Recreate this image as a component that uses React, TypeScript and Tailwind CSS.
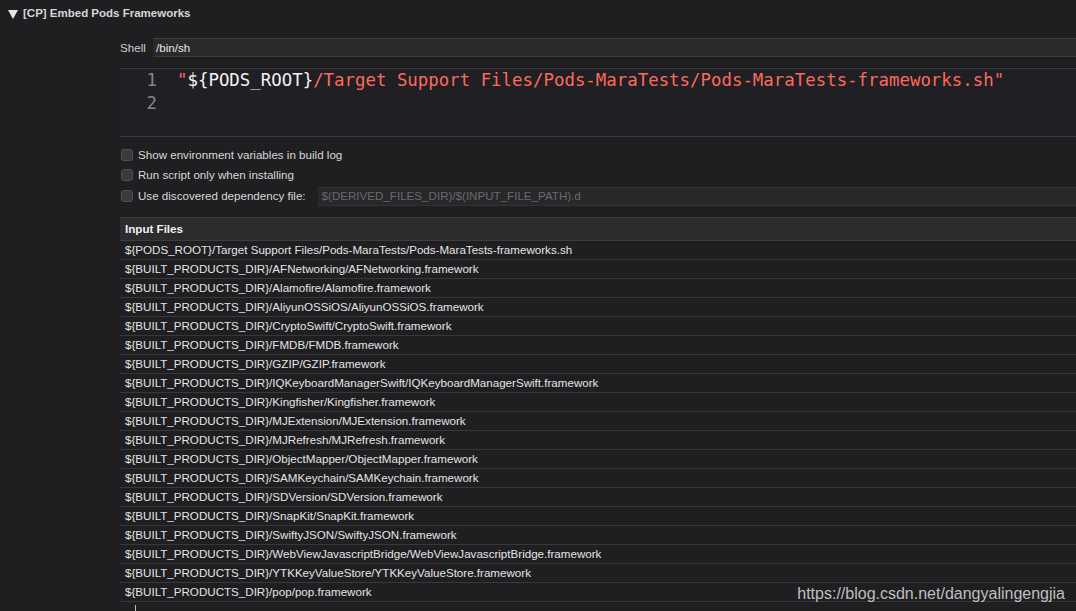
import React from 'react';

const files = [
  '${PODS_ROOT}/Target Support Files/Pods-MaraTests/Pods-MaraTests-frameworks.sh',
  '${BUILT_PRODUCTS_DIR}/AFNetworking/AFNetworking.framework',
  '${BUILT_PRODUCTS_DIR}/Alamofire/Alamofire.framework',
  '${BUILT_PRODUCTS_DIR}/AliyunOSSiOS/AliyunOSSiOS.framework',
  '${BUILT_PRODUCTS_DIR}/CryptoSwift/CryptoSwift.framework',
  '${BUILT_PRODUCTS_DIR}/FMDB/FMDB.framework',
  '${BUILT_PRODUCTS_DIR}/GZIP/GZIP.framework',
  '${BUILT_PRODUCTS_DIR}/IQKeyboardManagerSwift/IQKeyboardManagerSwift.framework',
  '${BUILT_PRODUCTS_DIR}/Kingfisher/Kingfisher.framework',
  '${BUILT_PRODUCTS_DIR}/MJExtension/MJExtension.framework',
  '${BUILT_PRODUCTS_DIR}/MJRefresh/MJRefresh.framework',
  '${BUILT_PRODUCTS_DIR}/ObjectMapper/ObjectMapper.framework',
  '${BUILT_PRODUCTS_DIR}/SAMKeychain/SAMKeychain.framework',
  '${BUILT_PRODUCTS_DIR}/SDVersion/SDVersion.framework',
  '${BUILT_PRODUCTS_DIR}/SnapKit/SnapKit.framework',
  '${BUILT_PRODUCTS_DIR}/SwiftyJSON/SwiftyJSON.framework',
  '${BUILT_PRODUCTS_DIR}/WebViewJavascriptBridge/WebViewJavascriptBridge.framework',
  '${BUILT_PRODUCTS_DIR}/YTKKeyValueStore/YTKKeyValueStore.framework',
  '${BUILT_PRODUCTS_DIR}/pop/pop.framework',
];

function Checkbox({ label, children }: { label: string; children?: React.ReactNode }) {
  return (
    <div className="flex h-[20px] items-center">
      <div className="ml-px h-[12px] w-[12px] rounded-[3px] border border-[#505053] bg-[#3a3a3d]" />
      <span className="ml-[5px] text-[11.6px] text-[#d8d8d8]">{label}</span>
      {children}
    </div>
  );
}

export default function App() {
  return (
    <div
      className="relative h-[611px] w-[1076px] overflow-hidden bg-[#1f1f22]"
      style={{ fontFamily: '"Liberation Sans", Arial, sans-serif' }}
    >
      {/* phase header */}
      <div className="flex h-[28px] items-center pl-[8px]">
        <svg width="10" height="9" viewBox="0 0 10 9" className="shrink-0">
          <path d="M0 0h10L5 9z" fill="#e6e6e6" />
        </svg>
        <span className="ml-[5px] text-[11.5px] font-bold text-[#d6d6d6]">[CP] Embed Pods Frameworks</span>
      </div>

      <div className="ml-[120px]">
        {/* shell */}
        <div className="mt-[10px] flex items-center">
          <span className="w-[33px] text-[11.6px] text-[#cfcfcf]">Shell</span>
          <div className="flex h-[19px] flex-1 items-center border-y border-[#3d3d40] bg-[#2a2a2d] pl-[3px] text-[11.6px] text-[#e6e6e6]">
            /bin/sh
          </div>
        </div>

        {/* script editor */}
        <div
          className="mt-[11px] flex h-[69px] border-y border-[#3a3a3d] bg-[#1f1f24] text-[17.4px] leading-[23px]"
          style={{ fontFamily: '"DejaVu Sans Mono", "Liberation Mono", monospace' }}
        >
          <div className="w-[37px] text-right text-[#85858a]">
            <div>1</div>
            <div>2</div>
          </div>
          <div className="ml-[20px] whitespace-pre">
            <span className="text-[#fc6a5d]">"</span>
            <span className="text-[#f2f2f2]">{'${PODS_ROOT}'}</span>
            <span className="text-[#fc6a5d]">/Target Support Files/Pods-MaraTests/Pods-MaraTests-frameworks.sh"</span>
          </div>
        </div>

        {/* options */}
        <div className="mt-[8px]">
          <Checkbox label="Show environment variables in build log" />
          <Checkbox label="Run script only when installing" />
          <div className="pt-px">
            <Checkbox label="Use discovered dependency file:">
              <div className="ml-[12px] flex h-[19px] flex-1 items-center border-y border-[#333336] bg-[#28282b] pl-[4px] text-[11.6px] text-[#6a6a6c]">
                $(DERIVED_FILES_DIR)/$(INPUT_FILE_PATH).d
              </div>
            </Checkbox>
          </div>
        </div>

        {/* input files */}
        <div className="mt-[11px]">
          <div className="flex h-[24px] items-center border-y border-[#3d3d40] bg-[#2c2c2f] pl-[5px] text-[11.6px] font-semibold text-[#f0f0f0]">
            Input Files
          </div>
          {files.map((f) => (
            <div
              key={f}
              className="flex h-[19px] items-center border-b border-[#38383b] pl-[5px] text-[11.6px] text-[#e4e4e4]"
            >
              {f}
            </div>
          ))}
          <div className="ml-[15px] mt-[3px] h-[8px] w-px bg-[#bdbdbd]" />
        </div>
      </div>

      {/* watermark */}
      <div className="absolute right-[11px] top-[582px] text-[16px] text-[#bfbfbf]">
        https://blog.csdn.net/dangyalingengjia
      </div>
    </div>
  );
}
